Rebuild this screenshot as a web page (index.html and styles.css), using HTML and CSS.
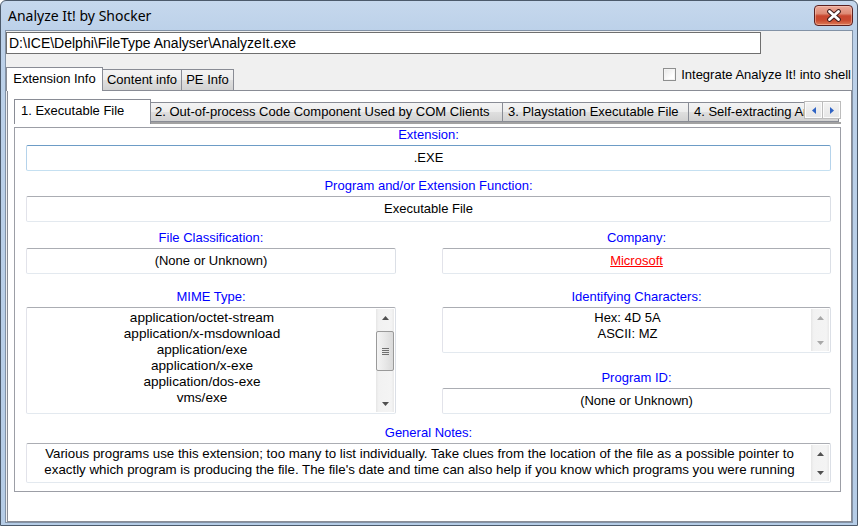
FILE: index.html
```html
<!DOCTYPE html>
<html lang="en">
<head>
<meta charset="utf-8">
<title>Analyze It! by Shocker</title>
<link rel="stylesheet" href="styles.css">
</head>
<body>
<div class="window">
  <div class="titlebar">
    <span class="title">Analyze It! by Shocker</span>
    <div class="close">
      <svg width="16" height="13" viewBox="0 0 16 13"><path d="M3.5 2.5 L12.5 10.5 M12.5 2.5 L3.5 10.5" stroke="#3f1d1d" stroke-width="4.8" stroke-linecap="round"/><path d="M3.5 2.5 L12.5 10.5 M12.5 2.5 L3.5 10.5" stroke="#ffffff" stroke-width="2.8" stroke-linecap="round"/></svg>
    </div>
  </div>
  <div class="client">
    <div class="path">D:\ICE\Delphi\FileType Analyser\AnalyzeIt.exe</div>
    <div class="outer-head">
      <div class="otabs">
        <div class="otab sel w1">Extension Info</div>
        <div class="otab w2">Content info</div>
        <div class="otab w3">PE Info</div>
      </div>
      <div class="check"><span class="cbox"></span><span>Integrate Analyze It! into shell</span></div>
    </div>
    <div class="outer-panel">
      <div class="inner-head">
        <div class="itabs">
          <div class="itab sel t1">1. Executable File</div>
          <div class="itab t2">2. Out-of-process Code Component Used by COM Clients</div>
          <div class="itab t3">3. Playstation Executable File</div>
          <div class="itab t4">4. Self-extracting Archive</div>
        </div>
        <div class="tab-arrows">
          <div class="tarrow"><svg width="4" height="7" viewBox="0 0 4 7"><path d="M4 0 L0 3.5 L4 7Z" fill="#2f63c4"/></svg></div>
          <div class="tarrow r"><svg width="4" height="7" viewBox="0 0 4 7"><path d="M0 0 L4 3.5 L0 7Z" fill="#2f63c4"/></svg></div>
        </div>
      </div>
      <div class="inner-panel">
        <div class="group">
          <div class="lbl">Extension:</div>
          <div class="fld focus">.EXE</div>
        </div>
        <div class="group g2">
          <div class="lbl">Program and/or Extension Function:</div>
          <div class="fld">Executable File</div>
        </div>
        <div class="cols g3">
          <div class="group">
            <div class="lbl">File Classification:</div>
            <div class="fld">(None or Unknown)</div>
          </div>
          <div class="group">
            <div class="lbl">Company:</div>
            <div class="fld"><span class="link">Microsoft</span></div>
          </div>
        </div>
        <div class="cols g4">
          <div class="group">
            <div class="lbl">MIME Type:</div>
            <div class="list mime">
              <div class="lines">
                <div>application/octet-stream</div>
                <div>application/x-msdownload</div>
                <div>application/exe</div>
                <div>application/x-exe</div>
                <div>application/dos-exe</div>
                <div>vms/exe</div>
              </div>
              <div class="sbar">
                <div class="sbtn"><svg width="7" height="4" viewBox="0 0 7 4"><path d="M0 4 L3.5 0 L7 4Z" fill="#505050"/></svg></div>
                <div class="strack"><div class="thumb"><svg width="7" height="7" viewBox="0 0 7 7"><path d="M0 0.5h7M0 2.5h7M0 4.5h7M0 6.5h7" stroke="#6f6f6f" stroke-width="1"/></svg></div></div>
                <div class="sbtn"><svg width="7" height="4" viewBox="0 0 7 4"><path d="M0 0 L3.5 4 L7 0Z" fill="#505050"/></svg></div>
              </div>
            </div>
          </div>
          <div class="group">
            <div class="lbl">Identifying Characters:</div>
            <div class="list ident">
              <div class="lines">
                <div>Hex: 4D 5A</div>
                <div>ASCII: MZ</div>
              </div>
              <div class="sbar">
                <div class="sbtn"><svg width="7" height="4" viewBox="0 0 7 4"><path d="M0 4 L3.5 0 L7 4Z" fill="#a8a8a8"/></svg></div>
                <div class="strack"></div>
                <div class="sbtn"><svg width="7" height="4" viewBox="0 0 7 4"><path d="M0 0 L3.5 4 L7 0Z" fill="#a8a8a8"/></svg></div>
              </div>
            </div>
            <div class="lbl pid">Program ID:</div>
            <div class="fld">(None or Unknown)</div>
          </div>
        </div>
        <div class="group g5">
          <div class="lbl">General Notes:</div>
          <div class="list notes">
            <div class="lines">
              <div>Various programs use this extension; too many to list individually. Take clues from the location of the file as a possible pointer to</div>
              <div>exactly which program is producing the file. The file's date and time can also help if you know which programs you were running</div>
            </div>
            <div class="sbar">
              <div class="sbtn"><svg width="7" height="4" viewBox="0 0 7 4"><path d="M0 4 L3.5 0 L7 4Z" fill="#505050"/></svg></div>
              <div class="strack"></div>
              <div class="sbtn"><svg width="7" height="4" viewBox="0 0 7 4"><path d="M0 0 L3.5 4 L7 0Z" fill="#505050"/></svg></div>
            </div>
          </div>
        </div>
      </div>
    </div>
  </div>
</div>
</body>
</html>
```

FILE: styles.css
```css
* { box-sizing: border-box; }
html, body { margin: 0; padding: 0; }
body {
  width: 858px;
  height: 526px;
  overflow: hidden;
  background: #ffffff;
  font-family: "Liberation Sans", Arial, sans-serif;
  font-size: 13px;
  color: #000;
}
.window {
  width: 858px;
  height: 526px;
  border: 1px solid #4c5a6b;
  border-radius: 6px 6px 0 0;
  background: linear-gradient(#c6d8ed, #bcd1e9 30px, #b5cce6);
  display: flex;
  flex-direction: column;
}
.titlebar {
  height: 29px;
  display: flex;
  justify-content: space-between;
  align-items: flex-start;
}
.title {
  font-family: "Noto Sans", "Open Sans", sans-serif;
  font-size: 14px;
  line-height: 20px;
  margin: 5px 0 0 7px;
  color: #000;
}
.close {
  width: 39px;
  height: 21px;
  margin: 4px 4px 0 0;
  border: 1px solid #5b2020;
  border-radius: 4px;
  background: linear-gradient(#eba99a, #de8a74 40%, #c9472f 52%, #c94a30 75%, #dc7a58);
  box-shadow: inset 0 0 0 1px rgba(255, 215, 200, 0.45);
  display: flex;
  align-items: center;
  justify-content: center;
}
.client {
  flex: 1;
  margin: 0 4px 2px 4px;
  border: 1px solid #8292a6;
  background: #f0f0f0;
  display: flex;
  flex-direction: column;
}
.path {
  margin-top: 1px;
  width: 755px;
  height: 22px;
  border: 1px solid #6f6f6f;
  background: #fff;
  padding: 0 2px;
  font-size: 14px;
  line-height: 20px;
  white-space: nowrap;
}
.outer-head {
  height: 36px;
  display: flex;
  justify-content: space-between;
  align-items: flex-start;
}
.otabs {
  align-self: flex-end;
  display: flex;
  align-items: flex-end;
  margin-bottom: -1px;
  position: relative;
  z-index: 1;
}
.otab, .itab {
  border: 1px solid #898c95;
  border-left: none;
  background: linear-gradient(#f4f4f4, #ececec 50%, #dfdfdf 50%, #d2d2d2);
  white-space: nowrap;
  overflow: hidden;
}
.otab {
  height: 22px;
  line-height: 20px;
  text-align: center;
}
.otab.sel {
  height: 24px;
  line-height: 22px;
  border-left: 1px solid #898c95;
  border-bottom: none;
  background: #fff;
}
.w1 { width: 97px; }
.w2 { width: 79px; }
.w3 { width: 52px; }
.check {
  margin: 14px 1px 0 0;
  display: flex;
  align-items: center;
  gap: 5px;
  line-height: 13px;
}
.cbox {
  width: 13px;
  height: 13px;
  border: 1px solid #8e8f8f;
  background: linear-gradient(135deg, #e6e6e6, #ffffff 70%);
  box-shadow: inset 0 0 0 1px #f4f4f4;
}
.outer-panel {
  flex: 1;
  margin-left: 1px;
  border: 1px solid #898c95;
  background: #fff;
  display: flex;
  flex-direction: column;
}
.inner-head {
  position: relative;
  margin: 8px 10px 0 6px;
}
.itabs {
  height: 25px;
  display: flex;
  align-items: flex-end;
  border-bottom: 2px solid #a2a2a2;
}
.itab {
  flex: none;
  height: 20px;
  line-height: 18px;
  padding-left: 5px;
}
.itab.sel {
  height: 25px;
  margin-bottom: -2px;
  line-height: 22px;
  border-left: 1px solid #898c95;
  border-bottom: none;
  background: #fff;
  padding-left: 6px;
}
.t1 { width: 137px; }
.t2 { width: 352px; padding-left: 4px; }
.t3 { width: 186px; }
.t4 { width: 150px; }
.tab-arrows {
  position: absolute;
  top: 2px;
  right: 0;
  display: flex;
  background: #fff;
}
.tarrow {
  width: 19px;
  height: 18px;
  border: 1px solid #bcbcbc;
  background: linear-gradient(#f3f3f3, #e6e6e6);
  box-shadow: inset 0 0 0 1px #fbfbfb;
  display: flex;
  align-items: center;
  justify-content: center;
}
.tarrow.r { width: 18px; border-left: none; }
.inner-panel {
  flex: 1;
  margin: 3px 10px 29px 6px;
  border: 1px solid #9c9ea6;
  padding: 0 9px 0 11px;
  display: flex;
  flex-direction: column;
}
.group {
  display: flex;
  flex-direction: column;
}
.lbl {
  height: 14px;
  line-height: 14px;
  margin-bottom: 3px;
  text-align: center;
  color: #0000ff;
  white-space: nowrap;
}
.lbl.pid { margin-top: 18px; }
.fld {
  height: 26px;
  border: 1px solid;
  border-color: #abadb3 #dbdfe6 #e3e9ef #e2e3ea;
  border-radius: 2px;
  background: #fff;
  text-align: center;
  line-height: 24px;
  white-space: nowrap;
}
.fld.focus { border-color: #6d9cc6 #b5d3eb #c5e0f1 #b5d3eb; }
.link { color: #ff0000; text-decoration: underline; }
.g2 { margin-top: 8px; }
.g3 { margin-top: 9px; }
.g4 { margin-top: 16px; }
.g5 { margin-top: 12px; }
.cols {
  display: grid;
  grid-template-columns: 370px 1fr;
  column-gap: 46px;
}
.list {
  display: flex;
  padding: 1px;
  border: 1px solid;
  border-color: #abadb3 #dbdfe6 #e3e9ef #e2e3ea;
  border-radius: 2px;
  background: #fff;
}
.mime { height: 107px; }
.ident { height: 46px; }
.notes { height: 40px; }
.lines {
  flex: 1;
  min-width: 0;
  overflow: hidden;
  padding-top: 1px;
  line-height: 16px;
  text-align: center;
  white-space: nowrap;
}
.mime .lines { font-size: 13.6px; }
.notes .lines { font-size: 13.3px; }
.sbar {
  width: 18px;
  display: flex;
  flex-direction: column;
  background: linear-gradient(to right, #e6e6e6, #f2f2f2 15%, #f4f4f4 85%, #e9e9e9);
}
.sbtn {
  height: 17px;
  flex: none;
  display: flex;
  align-items: center;
  justify-content: center;
}
.strack { flex: 1; }
.thumb {
  margin: 5px 0 0 0;
  height: 40px;
  border: 1px solid #9a9a9a;
  border-radius: 2px;
  background: linear-gradient(to right, #f4f4f4, #e8e8e8 50%, #dadada);
  display: flex;
  align-items: center;
  justify-content: center;
}
```
